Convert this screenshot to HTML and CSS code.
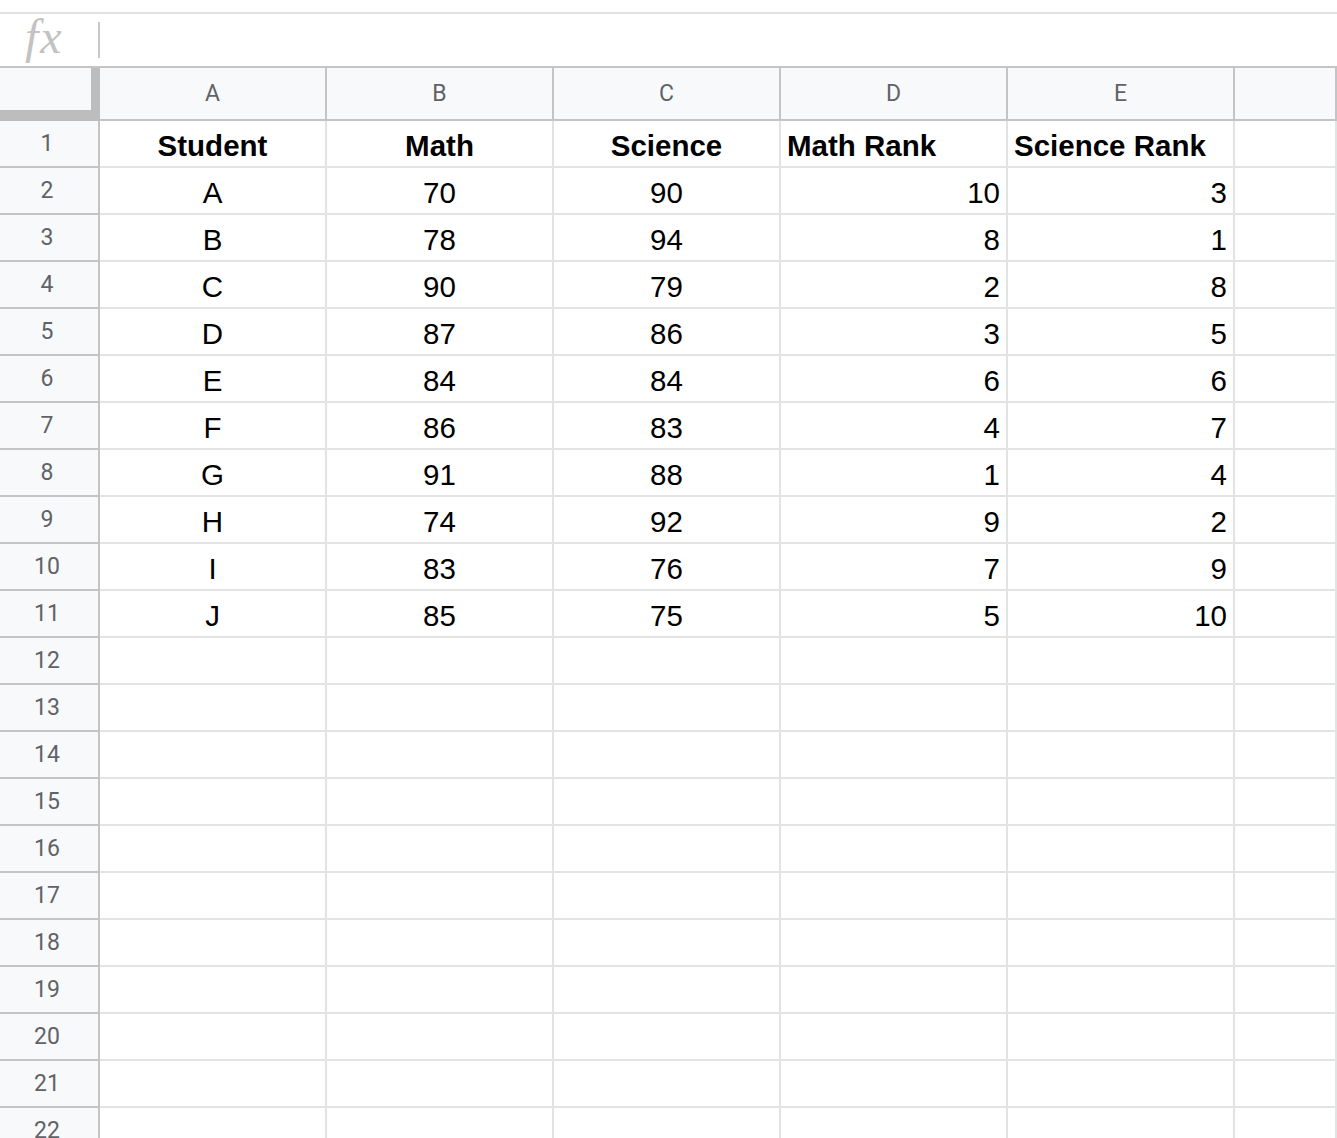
FILE: index.html
```html
<!DOCTYPE html>
<html lang="en">
<head>
  <meta charset="UTF-8">
  <meta name="viewport" content="width=device-width, initial-scale=1.0">
  <title>Student Ranks</title>
  <link rel="stylesheet" href="styles.css">
</head>
<body>

  <div class="formula-bar">
    <span class="fx">fx</span>
    <span class="fx-sep"></span>
    <div class="fx-input"></div>
  </div>

  <div class="sheet" id="sheet">
    <div class="corner"></div>
    <div class="col-head">A</div>
    <div class="col-head">B</div>
    <div class="col-head">C</div>
    <div class="col-head">D</div>
    <div class="col-head">E</div>
    <div class="col-head"></div>
  </div>

  <script>
    // Student scores: name, math, science, math rank, science rank
    const rows = [
      ["A", 70, 90, 10, 3],
      ["B", 78, 94, 8, 1],
      ["C", 90, 79, 2, 8],
      ["D", 87, 86, 3, 5],
      ["E", 84, 84, 6, 6],
      ["F", 86, 83, 4, 7],
      ["G", 91, 88, 1, 4],
      ["H", 74, 92, 9, 2],
      ["I", 83, 76, 7, 9],
      ["J", 85, 75, 5, 10]
    ];
    const totalRows = 22;
    const sheet = document.getElementById("sheet");

    const addCell = (text, cls) => {
      const cell = document.createElement("div");
      cell.className = cls;
      cell.textContent = text;
      sheet.appendChild(cell);
    };

    for (let r = 1; r <= totalRows; r++) {
      addCell(r, "row-head");
      if (r === 1) {
        addCell("Student", "cell center bold");
        addCell("Math", "cell center bold");
        addCell("Science", "cell center bold");
        addCell("Math Rank", "cell bold");
        addCell("Science Rank", "cell bold");
      } else if (rows[r - 2]) {
        const [name, math, science, mathRank, scienceRank] = rows[r - 2];
        addCell(name, "cell center");
        addCell(math, "cell center");
        addCell(science, "cell center");
        addCell(mathRank, "cell right");
        addCell(scienceRank, "cell right");
      } else {
        for (let c = 0; c < 5; c++) addCell("", "cell");
      }
      addCell("", "cell");
    }
  </script>

</body>
</html>
```

FILE: styles.css
```css
* {
  box-sizing: border-box;
}

html, body {
  margin: 0;
  overflow: hidden;
  background: #fff;
}

body {
  font-family: Arial, "Liberation Sans", sans-serif;
}

/* formula bar */
.formula-bar {
  display: flex;
  align-items: center;
  margin-top: 12px;
  height: 56px;
  border-top: 2px solid #e1e1e1;
  border-bottom: 2px solid #c4c4c4;
}

.fx {
  width: 98px;
  padding-left: 25px;
  margin-top: -7px;
  font-family: "Liberation Serif", serif;
  font-style: italic;
  font-size: 48px;
  letter-spacing: 2px;
  line-height: 1;
  color: #c2c2c2;
}

.fx-sep {
  width: 2px;
  height: 36px;
  background: #c8c8c8;
}

.fx-input {
  flex: 1;
}

/* grid */
.sheet {
  display: grid;
  grid-template-columns: 100px repeat(5, 227px) 1fr;
  grid-template-rows: 53px;
  grid-auto-rows: 47px;
}

.corner {
  background: #f8f9fa;
  border-right: 9px solid #bdbdbd;
  border-bottom: 11px solid #bdbdbd;
}

.col-head {
  background: #f8f9fa;
  border-right: 2px solid #c4c4c4;
  border-bottom: 2px solid #c4c4c4;
  font-family: Roboto, sans-serif;
  font-size: 23px;
  line-height: 51px;
  text-align: center;
  color: #5f6368;
}

.row-head {
  background: #f8f9fa;
  border-right: 2px solid #c4c4c4;
  border-bottom: 2px solid #c4c4c4;
  padding-right: 4px;
  font-family: Roboto, sans-serif;
  font-size: 23px;
  line-height: 45px;
  text-align: center;
  color: #5f6368;
}

.cell {
  border-right: 2px solid #e2e3e3;
  border-bottom: 2px solid #e2e3e3;
  padding: 4px 6px 0;
  font-size: 29.5px;
  line-height: 41px;
  color: #000;
  white-space: nowrap;
  overflow: hidden;
}

.center {
  text-align: center;
}

.right {
  text-align: right;
}

.bold {
  font-weight: bold;
}
```
